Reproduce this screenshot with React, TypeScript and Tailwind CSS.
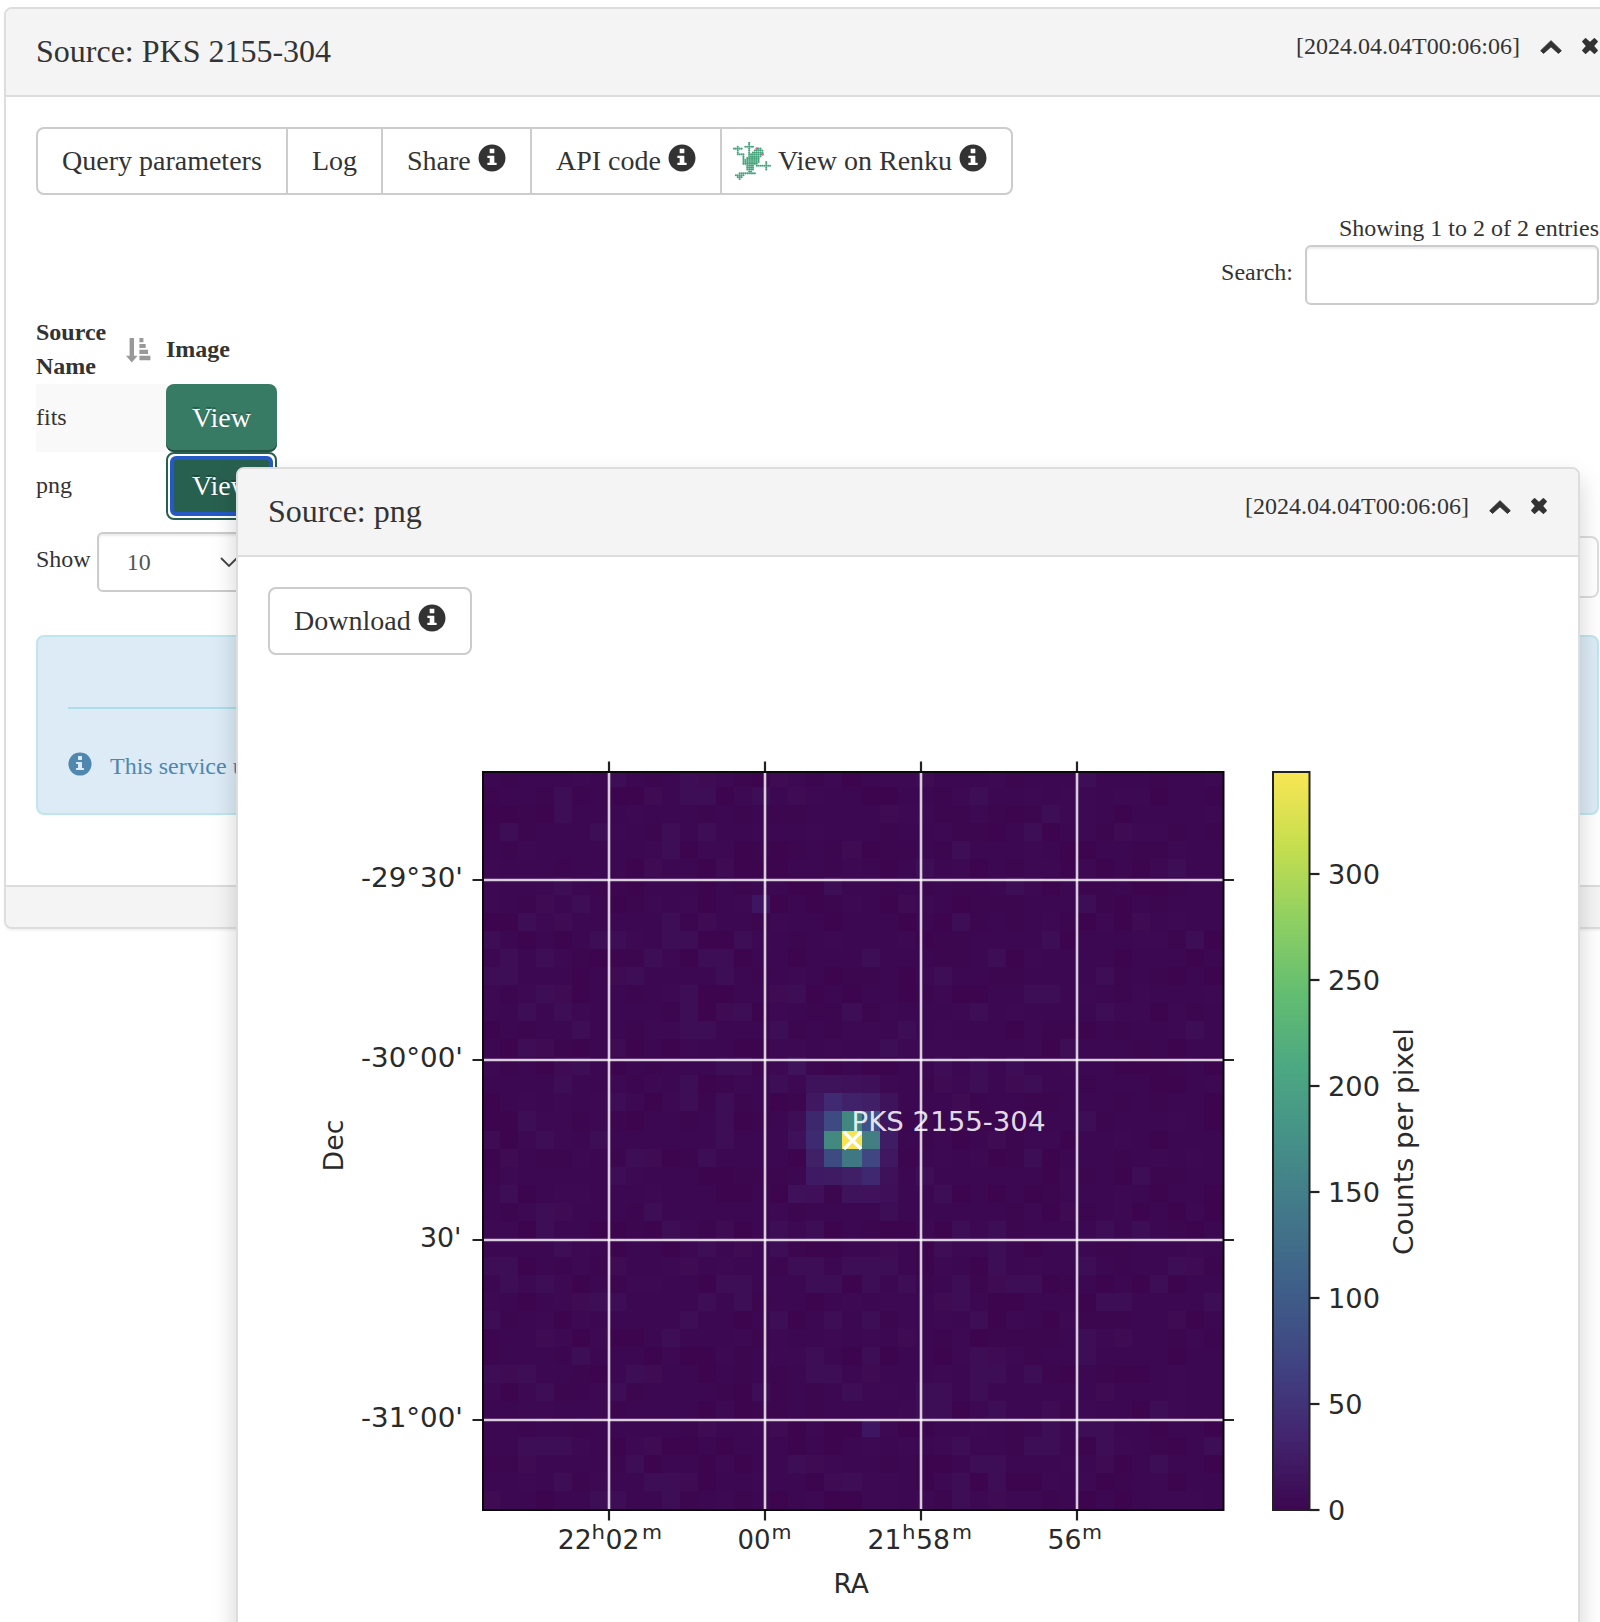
import React from "react";

const SERIF = "font-['Liberation_Serif','Times_New_Roman',serif]";

function InfoIcon({ size = 28, className = "" }: { size?: number; className?: string }) {
  return (
    <svg width={size} height={size} viewBox="0 0 1200 1200" fill="currentColor" className={`shrink-0 ${className}`}>
      <g transform="translate(0 1200) scale(1 -1)">
        <path d="M600 1178q118 0 225 -45.5t184.5 -123t123 -184.5t45.5 -225t-45.5 -225t-123 -184.5t-184.5 -123t-225 -45.5t-225 45.5t-184.5 123t-123 184.5t-45.5 225t45.5 225t123 184.5t184.5 123t225 45.5zM675 1000h-150q-10 0 -17.5 -7.5t-7.5 -17.5v-150q0 -10 7.5 -17.5t17.5 -7.5h150q10 0 17.5 7.5t7.5 17.5v150q0 10 -7.5 17.5t-17.5 7.5zM675 700h-250q-10 0 -17.5 -7.5t-7.5 -17.5v-50q0 -10 7.5 -17.5t17.5 -7.5h75v-200h-75q-10 0 -17.5 -7.5t-7.5 -17.5v-50q0 -10 7.5 -17.5t17.5 -7.5h350q10 0 17.5 7.5t7.5 17.5v50q0 10 -7.5 17.5t-17.5 7.5h-75v275q0 10 -7.5 17.5t-17.5 7.5z" />
      </g>
    </svg>
  );
}

function ChevronUp() {
  return (
    <svg width="22" height="14" viewBox="0 0 22 14" fill="#333" stroke="#333" strokeWidth="1" strokeLinejoin="round">
      <path d="M11 0.7L21.3 10.7L18.4 13.4L11 6.7L3.6 13.4L0.7 10.7Z" />
    </svg>
  );
}

function CloseIcon() {
  return (
    <svg width="16" height="16" viewBox="0 0 16 16" fill="#333" stroke="#333" strokeWidth="1.4" strokeLinejoin="round">
      <path d="M3.6 0.8L8 4.7L12.4 0.8L15.2 3.6L11.3 8L15.2 12.4L12.4 15.2L8 11.3L3.6 15.2L0.8 12.4L4.7 8L0.8 3.6Z" />
    </svg>
  );
}

function SortIcon() {
  return (
    <svg width="25" height="25" viewBox="0 0 25 25" fill="#999">
      <path d="M3.6 0H8V17.7H11.6L5.8 24.6L0 17.7H3.6Z" />
      <path d="M13.4 0H17.4V4.2H13.4ZM13.4 6H19.7V10H13.4ZM13.4 11.8H22V16H13.4ZM13.4 17.8H24.4V22.2H13.4Z" />
    </svg>
  );
}

const FROG = [
  "........#...........",
  "........#...........",
  "..#...#####.........",
  "#####...#...P##.....",
  "..#.....#..#####....",
  "..#.....#.######....",
  "..####..#######P....",
  ".....#..#######.....",
  ".....#.#######......",
  ".....#########......",
  ".....#########...#..",
  ".....########....#..",
  ".......####.########",
  ".......####......#..",
  ".......####......#..",
  "........##..........",
  "...#########........",
  ".#####..............",
  "..###...............",
  "...#................",
];

function Frog() {
  return (
    <svg width="38" height="38" viewBox="0 0 20 20" className="shrink-0">
      {FROG.flatMap((row, r) =>
        row.split("").map((ch, c) =>
          ch === "." ? null : (
            <circle key={`${r}-${c}`} cx={c + 0.5} cy={r + 0.5} r={ch === "P" ? 0.75 : 0.56} fill={ch === "P" ? "#e0569f" : "#45a27a"} />
          ),
        ),
      )}
    </svg>
  );
}

function WindowHeader({ title }: { title: string }) {
  return (
    <div className="flex h-[88px] items-center justify-between border-b-2 border-[#ddd] bg-[#f4f4f4] pl-[30px] pr-[31px]">
      <h2 className="mb-0.5 text-[32px] leading-10">{title}</h2>
      <div className="mb-3 flex items-center text-[24px] leading-8">
        <span className="mr-5">[2024.04.04T00:06:06]</span>
        <span className="mr-5 mt-0.5"><ChevronUp /></span>
        <CloseIcon />
      </div>
    </div>
  );
}

/* Brighter cells of the counts map: one list of columns for every row. */
const SPECKS: number[][] = [
  [7, 11, 12, 16, 24, 33], [4, 9, 11, 12, 15, 17, 27], [4, 22, 31], [1, 6, 10, 12, 30, 35], [10, 20, 26], [9, 13, 24, 38],
  [4, 19, 29], [3, 5, 15, 23, 33], [2, 4, 10, 12, 26, 36], [0, 6, 7, 10, 11, 14, 31, 39], [1, 3, 9, 12, 13, 21, 28], [0, 1, 7, 8, 13, 25, 34],
  [3, 4, 11, 16, 17, 30, 31], [2, 4, 11, 13, 14, 20, 27, 34], [5, 11, 12, 16, 23, 39], [2, 3, 7, 22, 32], [4, 5, 13, 14, 17, 25, 27, 29], [4, 11, 16, 25, 27, 29, 30],
  [7, 11, 13, 26], [2, 13, 17, 33], [0, 3, 6, 13, 17, 28], [1, 8, 9, 12, 30], [7, 24, 36], [1, 17, 18, 25], [3, 4, 9, 22, 32],
  [3, 10, 13, 16, 18, 26, 28, 34, 36], [4, 12, 14, 16, 22, 25, 28], [0, 1, 7, 11, 17, 18, 20, 21, 22, 28, 33, 38, 39],
  [1, 3, 13, 14, 18, 19, 21, 23, 26, 28, 29, 30, 37], [5, 6, 7, 12, 14, 25, 26, 34, 35, 40], [0, 11, 16, 19, 21, 27, 38],
  [3, 10, 23, 33, 35], [5, 18, 21, 27, 28, 33], [0, 1, 2, 8, 9, 18, 19, 21, 27, 28, 30], [3, 7, 15, 20, 24, 25, 27, 34],
  [24, 25, 28, 31, 37], [12, 16, 21, 31, 33, 34], [2, 3, 4, 9, 26, 30, 31, 34, 40], [2, 8, 17, 18, 27, 28, 34, 37],
  [4, 9, 10, 11, 19, 20, 26, 28], [0, 6, 7, 10, 26, 28],
];

const SOURCE: Record<string, string> = {
  "16,17": "#3f125c", "17,18": "#3f135c", "17,19": "#3f135c", "17,20": "#3e115a", "17,21": "#3f105a",
  "18,18": "#3f1861", "18,19": "#402b72", "18,20": "#3f2269", "18,21": "#401f66", "18,22": "#3e135c",
  "19,18": "#3d286e", "19,19": "#3e4a82", "19,20": "#428680", "19,21": "#3e5087", "19,22": "#3f1660",
  "20,17": "#3e115a", "20,18": "#3d2a70", "20,19": "#448980", "20,20": "#f8e44e", "20,21": "#427e82", "20,22": "#3f1c64",
  "21,18": "#402168", "21,19": "#3e4a82", "21,20": "#3f7783", "21,21": "#3f4682", "21,22": "#3f1861",
  "22,18": "#3f1964", "22,19": "#3f1b64", "22,20": "#401f67", "22,21": "#3f2870", "22,22": "#3f115b",
  "23,17": "#3f115a", "23,18": "#3f1059", "23,20": "#3f135c", "23,21": "#3f125b", "23,22": "#3f1059", "36,21": "#3e1560", "7,15": "#3e1560",
};

const SHADES = ["#3c0851", "#3d0750", "#3c0851", "#3d0952", "#3d054e", "#3c0851"];
const cellX = (c: number) => 482 + 18 * c + (c > 20 ? 2 : 0);
const cellY = (r: number) => (r === 0 ? 772 : 768.7 + 18 * r + (r > 19 ? 2 : 0));

function cellColor(r: number, c: number) {
  const known = SOURCE[`${r},${c}`];
  if (known) return known;
  if (SPECKS[r].includes(c)) return (r * 3 + c) % 4 === 0 ? "#3f0c54" : "#3d0e56";
  const h = Math.abs(Math.sin(r * 127.1 + c * 311.7) * 43758.5453);
  return SHADES[Math.floor((h - Math.floor(h)) * SHADES.length)];
}

function T({ x, y, w, children, size = 26.5 }: { x: number; y: number; w?: number; children: string; size?: number }) {
  return (
    <text x={x} y={y} fontSize={size} textLength={w} lengthAdjust="spacingAndGlyphs">
      {children}
    </text>
  );
}

function SkyMap() {
  const idx = Array.from({ length: 41 }, (_, i) => i);
  const xs = [609, 765, 921, 1077];
  const ys = [880, 1060, 1240, 1420];
  return (
    <svg width="1104" height="882" viewBox="300 740 1104 882" fontFamily="DejaVu Sans, sans-serif" fill="#2a2a2a" className="block overflow-visible">
      <defs>
        <linearGradient id="viridis" x1="0" y1="1" x2="0" y2="0">
          {["#3c0750", "#43256f", "#404482", "#3f5f89", "#42778a", "#459088", "#4ca882", "#63bd71", "#8fd062", "#c6de4e", "#f9e654"].map((c, i) => (
            <stop key={c} offset={i / 10} stopColor={c} />
          ))}
        </linearGradient>
      </defs>
      <g shapeRendering="crispEdges">
        <rect x="483" y="772" width="741" height="738" fill="#3c0851" />
        {idx.map((r) => idx.map((c) => (
          <rect key={`${r}-${c}`} x={cellX(c)} y={cellY(r)} width={c === 20 ? 20 : 18} height={r === 0 ? 14.7 : r === 19 ? 20 : 18} fill={cellColor(r, c)} />
        )))}
      </g>
      <g stroke="#fff" strokeOpacity="0.8" strokeWidth="2.6">
        {xs.map((x) => <path key={x} d={`M${x} 772V1510`} />)}
        {ys.map((y) => <path key={y} d={`M483 ${y}H1223`} />)}
      </g>
      <g stroke="#222" strokeWidth="2.2">
        {xs.map((x) => <path key={x} d={`M${x} 761.5V772M${x} 1510V1520.5`} />)}
        {ys.map((y) => <path key={y} d={`M472.5 ${y}H483M1223 ${y}H1234`} />)}
      </g>
      <rect x="483" y="772" width="740.5" height="738" fill="none" stroke="#0a0a0a" strokeWidth="2" />
      <rect x="1273" y="772" width="36.5" height="738" fill="url(#viridis)" stroke="#222" strokeWidth="2" />
      {[0, 50, 100, 150, 200, 250, 300].map((v) => {
        const y = 1510 - v * 2.12;
        return (
          <g key={v}>
            <path d={`M1310 ${y}h9.5`} stroke="#222" strokeWidth="2.2" />
            <T x={1328} y={y + 10} w={v === 0 ? 17.2 : v === 50 ? 34.5 : 52}>{String(v)}</T>
          </g>
        );
      })}
      <T x={361} y={886.7} w={102}>-29°30'</T>
      <T x={361} y={1066.7} w={102}>-30°00'</T>
      <T x={420} y={1246.7} w={41.5}>30'</T>
      <T x={361} y={1426.7} w={102}>-31°00'</T>

      <T x={557.8} y={1549} w={34}>22</T>
      <T x={591.4} y={1538.7} size={20} w={13.5}>h</T>
      <T x={605.5} y={1549} w={34}>02</T>
      <T x={641.9} y={1538.7} size={20} w={20}>m</T>
      <T x={737.6} y={1549} w={33}>00</T>
      <T x={771.6} y={1538.7} size={20} w={20}>m</T>
      <T x={867.4} y={1549} w={34}>21</T>
      <T x={902} y={1538.7} size={20} w={13.5}>h</T>
      <T x={916} y={1549} w={34}>58</T>
      <T x={952} y={1538.7} size={20} w={20}>m</T>
      <T x={1047.5} y={1549} w={34}>56</T>
      <T x={1082} y={1538.7} size={20} w={20}>m</T>
      <T x={833.5} y={1592.7} w={35.5}>RA</T>
      <g transform="translate(342.5 1171.5) rotate(-90)"><T x={0} y={0} w={52}>Dec</T></g>
      <g transform="translate(1412.5 1255) rotate(-90)"><T x={0} y={0} w={227}>Counts per pixel</T></g>
      <g fill="#fff" fillOpacity="0.87"><T x={851.5} y={1130.5} w={194}>PKS 2155-304</T></g>
      <path d="M844 1132L861 1149M861 1132L844 1149" stroke="#fff" strokeWidth="3.2" />
    </svg>
  );
}

export default function App() {
  return (
    <div className={`relative h-[1622px] w-[1600px] overflow-hidden bg-white pl-1 pt-[7px] text-[24px] leading-[34px] text-[#333] ${SERIF}`}>
      <section className="flex h-[922px] w-[1627px] flex-col overflow-hidden rounded-lg border-2 border-[#ddd] bg-white shadow-[0_2px_2px_rgba(0,0,0,0.05)]">
        <WindowHeader title="Source: PKS 2155-304" />
        <div className="flex grow flex-col px-[30px] pt-[30px]">
          <div className="flex h-[68px] w-[977px] shrink-0 rounded-lg border-2 border-[#ccc] text-[28px] *:flex *:items-center *:border-[#ccc]">
            <div className="w-[250px] border-r-2 pl-6">Query parameters</div>
            <div className="w-[95px] border-r-2 pl-6">Log</div>
            <div className="w-[149px] border-r-2 pl-6">Share<InfoIcon className="mb-1.5 ml-[7px]" /></div>
            <div className="w-[190px] border-r-2 pl-6">API code<InfoIcon className="mb-1.5 ml-[7px]" /></div>
            <div className="pl-[11px]">
              <Frog />
              <span className="ml-[7px]">View on Renku</span>
              <InfoIcon className="mb-1.5 ml-[7px]" />
            </div>
          </div>

          <div className="mt-4 flex flex-col items-end">
            <div>Showing 1 to 2 of 2 entries</div>
            <div className="flex">
              <label className="mr-3 mt-2.5">Search:</label>
              <div className="h-[60px] w-[294px] rounded-md border-2 border-[#ccc] shadow-[inset_0_2px_2px_rgba(0,0,0,0.075)]" />
            </div>
          </div>

          <div className="mt-2.5 grid w-[241px] grid-cols-[130px_111px]">
            <div className="flex h-[69px] justify-between pr-[15px] font-bold">
              <span className="w-[76px]">Source Name</span>
              <span className="mt-[22.5px]"><SortIcon /></span>
            </div>
            <div className="flex items-center pb-0.5 font-bold">Image</div>
            <div className="flex h-[68px] items-center bg-[#f9f9f9] pb-0.5">fits</div>
            <button className="h-[68px] rounded-lg bg-[#377b65] text-[28px] text-white shadow-[inset_0_-2px_0_#234f40] [text-shadow:0_-2px_0_rgba(0,0,0,0.25)]">View</button>
            <div className="flex h-[68px] items-center pb-0.5">png</div>
            <button className="h-[68px] rounded-lg border-2 border-[#28604f] bg-white p-0.5 text-[28px] text-white [text-shadow:0_-2px_0_rgba(0,0,0,0.25)]">
              <span className="flex h-full items-center justify-center rounded-md border-4 border-[#255ac6] bg-[#28604f]">View</span>
            </button>
          </div>

          <div className="mt-3 flex justify-between">
            <div className="flex">
              <span className="mr-1.5 mt-2.5">Show</span>
              <div className="flex h-[60px] w-[170px] items-center rounded-md border-2 border-[#ccc] pl-7 text-[#555] shadow-[inset_0_2px_2px_rgba(0,0,0,0.075)]">
                10
                <svg width="18" height="10" viewBox="0 0 18 10" fill="none" stroke="#444" strokeWidth="1.8" className="ml-[69px]"><path d="M1 1L9 9L17 1" /></svg>
              </div>
            </div>
            <div className="mt-1 h-[62px] w-[160px] rounded-lg border-2 border-[#ddd]" />
          </div>

          <div className="mt-[37px] h-[180px] shrink-0 rounded-lg border-2 border-[#bfe6ee] bg-[#dcebf6] px-[30px] pt-[70px] text-[#5087ae]">
            <div className="h-0.5 bg-[#a9dfe9]" />
            <div className="mt-10 flex items-center">
              <InfoIcon size={24} className="mb-1" />
              <span className="ml-[18px]">This service uses</span>
            </div>
          </div>
        </div>
        <div className="h-[42px] shrink-0 border-t-2 border-[#ddd] bg-[#f4f4f4]" />
      </section>

      <section className="absolute left-[236px] top-[467px] h-[1200px] w-[1344px] rounded-lg border-2 border-[#ddd] bg-white shadow-[0_12px_24px_rgba(0,0,0,0.175)]">
        <div className="overflow-hidden rounded-t-md"><WindowHeader title="Source: png" /></div>
        <div className="px-[30px] pt-[30px]">
          <button className="flex h-[68px] w-[204px] items-center rounded-lg border-2 border-[#ccc] pl-6 text-[28px]">
            Download<InfoIcon className="mb-1.5 ml-[7px]" />
          </button>
          <div className="ml-8 mt-[85px]"><SkyMap /></div>
        </div>
      </section>
    </div>
  );
}
